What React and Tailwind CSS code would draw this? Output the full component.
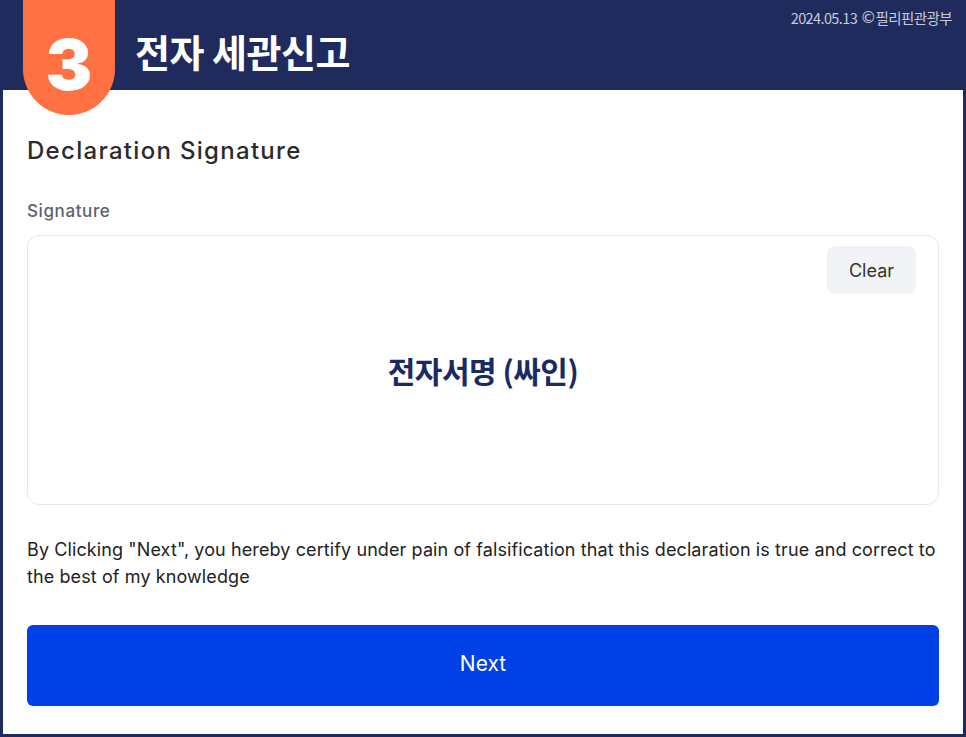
export default function App() {
  const sans = { fontFamily: 'Inter, "Noto Sans CJK KR", sans-serif' };
  const kr = { fontFamily: '"Noto Sans CJK KR", "Noto Sans", sans-serif' };
  return (
    <div className="w-[966px] h-[737px] bg-[#1f2b5d] flex flex-col relative overflow-hidden" style={sans}>
      <header className="h-[90px] flex-none relative">
        <div className="absolute right-[14px] top-[7px] text-[14.5px] text-[#c9ccd8] tracking-[-0.6px] flex items-center" style={kr}>
          <span>2024.05.13</span>
          <span className="ml-[3px] text-[16px] leading-none" style={{ fontFamily: '"DejaVu Sans", sans-serif' }}>©</span>
          <span>필리핀관광부</span>
        </div>
        <h1 className="absolute left-[135px] top-[25px] text-[38px] leading-[52px] font-bold text-white tracking-[-0.5px]" style={kr}>
          전자 세관신고
        </h1>
      </header>
      <div className="absolute left-[23px] top-0 w-[92px] h-[115px] bg-[#ff7043] rounded-b-[46px] flex items-center justify-center z-10">
        <span className="text-white font-black text-[70px] leading-none mt-[14px]" style={{ fontFamily: 'Inter, sans-serif' }}>3</span>
      </div>
      <main className="flex-1 mx-[3px] mb-[3px] bg-white px-[24px] pt-[45px] flex flex-col">
        <h2 className="text-[24px] leading-[32px] font-medium text-[#2b2b2b] tracking-[1.3px]">Declaration Signature</h2>
        <div className="mt-[32px] text-[17px] leading-[24px] font-medium text-[#5b6370] tracking-[0.6px]">Signature</div>
        <div className="mt-[12px] h-[270px] border border-[#e6e8ec] rounded-[12px] relative flex items-center justify-center">
          <button className="absolute right-[22px] top-[10px] w-[89px] h-[48px] rounded-[8px] bg-[#f1f3f7] text-[18px] text-[#333]">
            Clear
          </button>
          <span className="text-[30px] font-bold text-[#1a2b63] tracking-[-0.5px]" style={kr}>전자서명 (싸인)</span>
        </div>
        <p className="mt-[31px] text-[18px] leading-[27px] text-[#222] tracking-[0.1px]">
          By Clicking "Next", you hereby certify under pain of falsification that this declaration is true and correct to the best of my knowledge
        </p>
        <button className="mt-[35px] h-[81px] w-full rounded-[6px] bg-[#0040e6] text-white text-[21px] pb-[4px]">
          Next
        </button>
      </main>
    </div>
  );
}
